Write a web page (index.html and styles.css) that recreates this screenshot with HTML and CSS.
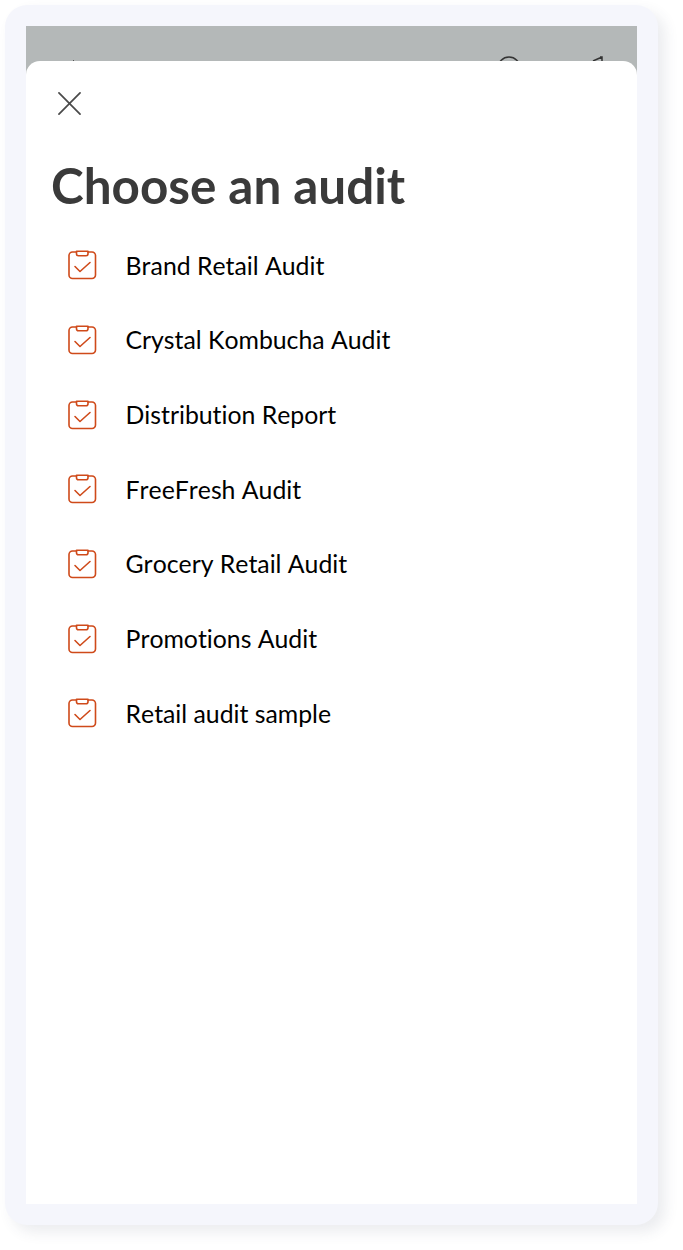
FILE: index.html
```html
<!DOCTYPE html>
<html lang="en">
<head>
    <meta charset="UTF-8">
    <title>Choose an audit</title>
    <link rel="stylesheet" href="styles.css">
</head>
<body>
    <svg width="0" height="0" class="defs">
        <symbol id="audit-icon" viewBox="0 0 30 30">
            <path d="M9.5 2H5.5A3.5 3.5 0 0 0 2 5.5V25a3.5 3.5 0 0 0 3.5 3.5H25a3.5 3.5 0 0 0 3.5-3.5V5.5A3.5 3.5 0 0 0 25 2H21"/>
            <path d="M9.5 1.2H21V3.7a2 2 0 0 1-2 2H11.5a2 2 0 0 1-2-2Z"/>
            <path d="M8 16.5l5 5 10-9"/>
        </symbol>
    </svg>

    <div class="frame">
        <div class="screen">
            <div class="topbar">
                <span class="back-tip"></span>
                <svg class="bar-icon search" width="30" height="30" viewBox="0 0 30 30"><circle cx="13" cy="12" r="11"/></svg>
                <svg class="bar-icon send" width="30" height="30" viewBox="0 0 30 30"><path d="M11 5L20 1M18 1H20V5"/></svg>
            </div>
            <div class="sheet">
                <button class="close" aria-label="Close">
                    <svg width="24" height="24" viewBox="0 0 24 24"><path d="M1 1L23 23M23 1L1 23"/></svg>
                </button>
                <h1>Choose an audit</h1>
                <ul class="audits">
                    <li><svg class="audit-icon"><use href="#audit-icon"/></svg>Brand Retail Audit</li>
                    <li><svg class="audit-icon"><use href="#audit-icon"/></svg>Crystal Kombucha Audit</li>
                    <li><svg class="audit-icon"><use href="#audit-icon"/></svg>Distribution Report</li>
                    <li><svg class="audit-icon"><use href="#audit-icon"/></svg>FreeFresh Audit</li>
                    <li><svg class="audit-icon"><use href="#audit-icon"/></svg>Grocery Retail Audit</li>
                    <li><svg class="audit-icon"><use href="#audit-icon"/></svg>Promotions Audit</li>
                    <li><svg class="audit-icon"><use href="#audit-icon"/></svg>Retail audit sample</li>
                </ul>
            </div>
        </div>
    </div>
</body>
</html>
```

FILE: styles.css
```css
* {
    margin: 0;
    padding: 0;
    box-sizing: border-box;
}

html, body {
    height: 100%;
}

body {
    font-family: 'Lato', sans-serif;
    font-variant-ligatures: none;
    font-kerning: none;
    background: #fff;
    padding: 5px 25px 25px 5px;
    overflow: hidden;
}

.defs {
    position: absolute;
}

.frame {
    height: 1220px;
    background: #f5f6fc;
    border-radius: 22px;
    padding: 21px;
    box-shadow: 7px 7px 14px rgba(60, 65, 100, 0.1);
}

.screen {
    height: 100%;
    background: #b4b8b8;
    display: flex;
    flex-direction: column;
    overflow: hidden;
}

.topbar {
    height: 35px;
    flex: none;
    display: flex;
    align-items: flex-end;
    padding: 0 25px 0 47px;
    overflow: hidden;
}

.back-tip {
    width: 1px;
    height: 1px;
    background: #555;
    margin-right: auto;
}

.bar-icon {
    flex: none;
    margin-bottom: -25px;
    fill: none;
    stroke: #333;
    stroke-width: 1.5;
}

.search {
    margin-right: 56px;
}

.sheet {
    flex: 1;
    background: #fff;
    border-radius: 14px 14px 0 0;
    padding: 30px 25px 0;
}

.close {
    display: block;
    width: 24px;
    height: 24px;
    margin-left: 7px;
    background: none;
    border: none;
}

.close svg {
    display: block;
    width: 23px;
    height: 23px;
    fill: none;
    stroke: #4a4a4a;
    stroke-width: 1.8;
    stroke-linecap: round;
}

h1 {
    font-size: 49.4px;
    font-weight: 700;
    line-height: 58px;
    color: #3a3a3a;
    margin-top: 41px;
    margin-bottom: 14px;
}

.audits {
    list-style: none;
}

.audits li {
    display: flex;
    align-items: center;
    height: 74.67px;
    font-size: 24.8px;
    color: #000;
}

.audit-icon {
    width: 30px;
    height: 30px;
    margin-left: 16px;
    margin-right: 28.5px;
    flex: none;
    fill: none;
    stroke: #cf4a1a;
    stroke-width: 1.6;
    stroke-linecap: round;
    stroke-linejoin: round;
}
```
